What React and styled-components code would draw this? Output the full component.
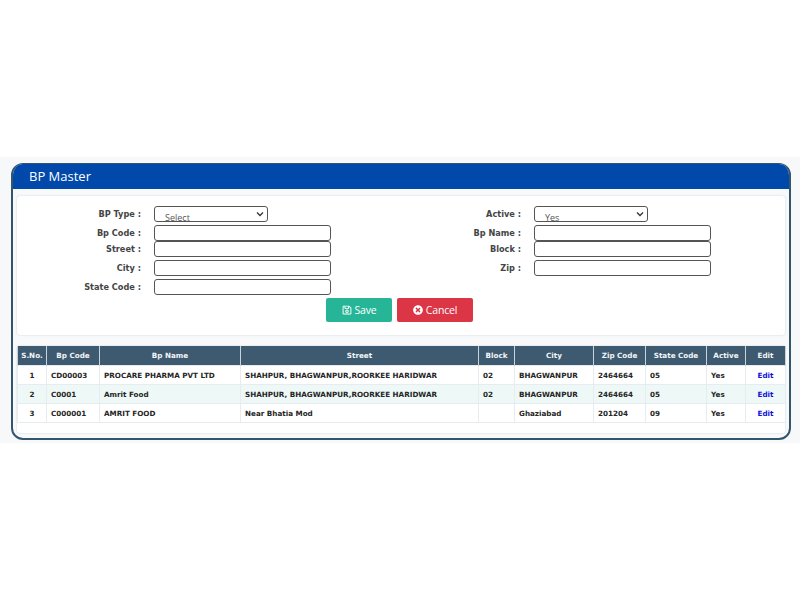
import React from "react";
import styled, { createGlobalStyle } from "styled-components";
import { FaRegSave, FaTimesCircle } from "react-icons/fa";

const GlobalStyle = createGlobalStyle`
  html, body {
    margin: 0;
    padding: 0;
    background: #fff;
    font-family: "DejaVu Sans", Verdana, sans-serif;
  }
`;

const chevron =
  "data:image/svg+xml,%3Csvg xmlns='http://www.w3.org/2000/svg' width='8' height='6' viewBox='0 0 8 6'%3E%3Cpath d='M1 1.5l3 3 3-3' fill='none' stroke='%23333' stroke-width='1.3'/%3E%3C/svg%3E";

const Page = styled.div`
  padding-top: 157px;
`;
const Band = styled.div`
  background: #f7f8fa;
  padding: 6px 9px 3px 11px;
`;
const Panel = styled.div`
  height: 277px;
  box-sizing: border-box;
  background: #f8f9fb;
  border: solid #34566c;
  border-width: 1px 2px 2px;
  border-radius: 12px;
  overflow: hidden;
`;
const PanelHeader = styled.div`
  height: 25px;
  background: #0049ab;
  color: #fff;
  font-family: "Open Sans", sans-serif;
  font-size: 13px;
  line-height: 25px;
  padding-left: 16px;
`;
const PanelBody = styled.div`
  padding: 7px 4px 0;
`;
const FormCard = styled.div`
  height: 139px;
  box-sizing: border-box;
  background: #fff;
  border-radius: 3px;
  box-shadow: 0 0 2px rgba(0, 0, 0, 0.18);
  padding-top: 10px;
`;
const Row = styled.div`
  display: flex;
  margin-top: ${(props) => props.$gap || 0}px;
`;
const Field = styled.div`
  width: 380px;
  display: flex;
  align-items: center;
`;
const Label = styled.label`
  width: 124px;
  margin-right: 13px;
  padding-bottom: 1px;
  text-align: right;
  font-size: 8.2px;
  font-weight: 700;
  color: #454545;
`;
const TextInput = styled.input`
  width: 177px;
  height: 16px;
  box-sizing: border-box;
  background: #fff;
  border: 1px solid #555;
  border-radius: 3px;
  padding: 0;
`;
const Select = styled.select`
  appearance: none;
  width: 114px;
  height: 16px;
  box-sizing: border-box;
  background: #fff url("${chevron}") no-repeat right 3px center;
  border: 1px solid #555;
  border-radius: 3px;
  padding: 4px 0 0 10px;
  font-family: "Open Sans", sans-serif;
  font-size: 9px;
  color: #555;
`;
const Actions = styled.div`
  display: flex;
  justify-content: center;
  gap: 5px;
  margin: 3px 3px 0 0;
`;
const Button = styled.button`
  height: 24px;
  width: ${(props) => props.$width}px;
  display: flex;
  align-items: center;
  justify-content: center;
  gap: 3px;
  border: none;
  border-radius: 2px;
  background: ${(props) => props.$color};
  color: #fff;
  font-family: "Open Sans", sans-serif;
  font-size: 10.5px;
  letter-spacing: -0.2px;
  padding: 0;
`;
const TableCard = styled.div`
  margin-top: 11px;
  height: 87px;
  background: #fff;
  border-radius: 2px;
  box-shadow: 0 0 2px rgba(0, 0, 0, 0.18);
`;
const Table = styled.table`
  width: 768px;
  table-layout: fixed;
  border-collapse: collapse;
  font-size: 7.2px;
  color: #252525;
`;
const HeadCell = styled.th`
  height: 19px;
  padding: 1px 0 0;
  box-sizing: border-box;
  background: #3d5a70;
  color: #f2f5f7;
  border: 1px solid #c9d3da;
  border-width: 0 1px;
  font-weight: 700;
  text-align: center;
`;
const BodyRow = styled.tr`
  background: ${(props) => (props.$stripe ? "#eef8f6" : "#fff")};
`;
const Cell = styled.td`
  height: 19px;
  box-sizing: border-box;
  padding: 1px 0 0 ${(props) => (props.$center ? 0 : 4)}px;
  border: 1px solid #e6ecef;
  font-weight: 700;
  text-align: ${(props) => (props.$center ? "center" : "left")};
  white-space: nowrap;
  overflow: hidden;
`;
const EditLink = styled.a`
  color: #1010dd;
  cursor: pointer;
`;

const columns = [
  { title: "S.No.", width: 29 },
  { title: "Bp Code", width: 53 },
  { title: "Bp Name", width: 141 },
  { title: "Street", width: 238 },
  { title: "Block", width: 36 },
  { title: "City", width: 79 },
  { title: "Zip Code", width: 52 },
  { title: "State Code", width: 61 },
  { title: "Active", width: 39 },
  { title: "Edit", width: 40 },
];

const rows = [
  ["1", "CD00003", "PROCARE PHARMA PVT LTD", "SHAHPUR, BHAGWANPUR,ROORKEE HARIDWAR", "02", "BHAGWANPUR", "2464664", "05", "Yes"],
  ["2", "C0001", "Amrit Food", "SHAHPUR, BHAGWANPUR,ROORKEE HARIDWAR", "02", "BHAGWANPUR", "2464664", "05", "Yes"],
  ["3", "C000001", "AMRIT FOOD", "Near Bhatia Mod", "", "Ghaziabad", "201204", "09", "Yes"],
];

const App = () => {
  return (
    <Page>
      <GlobalStyle />
      <Band>
        <Panel>
          <PanelHeader>BP Master</PanelHeader>
          <PanelBody>
            <FormCard>
              <Row>
                <Field>
                  <Label>BP Type :</Label>
                  <Select defaultValue="Select">
                    <option>Select</option>
                  </Select>
                </Field>
                <Field>
                  <Label>Active :</Label>
                  <Select defaultValue="Yes">
                    <option>Yes</option>
                  </Select>
                </Field>
              </Row>
              <Row $gap={3}>
                <Field>
                  <Label>Bp Code :</Label>
                  <TextInput />
                </Field>
                <Field>
                  <Label>Bp Name :</Label>
                  <TextInput />
                </Field>
              </Row>
              <Row>
                <Field>
                  <Label>Street :</Label>
                  <TextInput />
                </Field>
                <Field>
                  <Label>Block :</Label>
                  <TextInput />
                </Field>
              </Row>
              <Row $gap={3}>
                <Field>
                  <Label>City :</Label>
                  <TextInput />
                </Field>
                <Field>
                  <Label>Zip :</Label>
                  <TextInput />
                </Field>
              </Row>
              <Row $gap={3}>
                <Field>
                  <Label>State Code :</Label>
                  <TextInput />
                </Field>
              </Row>
              <Actions>
                <Button $width={66} $color="#26b597">
                  <FaRegSave size={10} />
                  Save
                </Button>
                <Button $width={76} $color="#dc3545">
                  <FaTimesCircle size={10} />
                  Cancel
                </Button>
              </Actions>
            </FormCard>
            <TableCard>
              <Table>
                <colgroup>
                  {columns.map((col) => (
                    <col key={col.title} width={col.width} />
                  ))}
                </colgroup>
                <thead>
                  <tr>
                    {columns.map((col) => (
                      <HeadCell key={col.title}>{col.title}</HeadCell>
                    ))}
                  </tr>
                </thead>
                <tbody>
                  {rows.map((row, i) => (
                    <BodyRow key={row[0]} $stripe={i === 1}>
                      {row.map((value, j) => (
                        <Cell key={j} $center={j === 0}>
                          {value}
                        </Cell>
                      ))}
                      <Cell $center>
                        <EditLink>Edit</EditLink>
                      </Cell>
                    </BodyRow>
                  ))}
                </tbody>
              </Table>
            </TableCard>
          </PanelBody>
        </Panel>
      </Band>
    </Page>
  );
};

export default App;
